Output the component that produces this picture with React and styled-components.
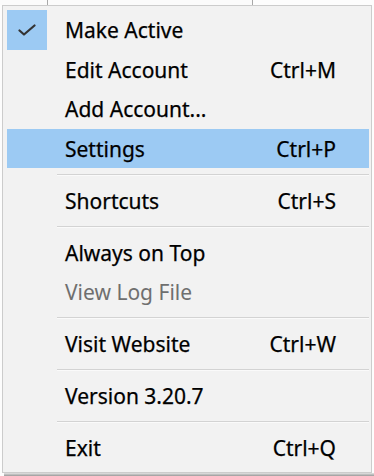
import styled, { createGlobalStyle } from 'styled-components';

const GlobalStyle = createGlobalStyle`
  html, body {
    margin: 0;
    padding: 0;
    background: #ffffff;
  }
  body {
    font-family: "Noto Sans", "Liberation Sans", sans-serif;
  }
`;

const Page = styled.div`
  width: 374px;
  height: 476px;
  display: flex;
  flex-direction: column;
  overflow: hidden;
  background: #fdfdfd;
`;

const Backdrop = styled.div`
  height: 5px;
  display: flex;
  flex: 0 0 auto;
`;

const BackdropCell = styled.div`
  width: ${props => props.$width}px;
  border-right: 1px solid #a8a8a8;
  background: #fbfbfb;
`;

const Menu = styled.div`
  margin-left: 2px;
  width: 370px;
  box-sizing: border-box;
  border: 1px solid #cccccc;
  background: #f2f2f2;
  padding: 4px 2px 4px 4px;
  display: flex;
  flex-direction: column;
`;

const Item = styled.div`
  height: 39.5px;
  display: grid;
  grid-template-columns: 40px 1fr auto;
  align-items: center;
  column-gap: 18px;
  padding-right: 33px;
  background: ${props => (props.$highlighted ? '#9ccaf3' : 'transparent')};
  color: ${props => (props.$disabled ? '#6f6f6f' : '#000000')};
  font-size: 21px;
  line-height: 1;
  -webkit-text-stroke: ${props => (props.$disabled ? '0' : '0.25px')};
`;

const CheckBox = styled.div`
  height: 39.5px;
  display: flex;
  align-items: center;
  justify-content: center;
  background: ${props => (props.$checked ? '#9ccaf3' : 'transparent')};
`;

const Label = styled.span`
  white-space: nowrap;
  padding-top: 2px;
`;

const Shortcut = styled.span`
  white-space: nowrap;
  text-align: right;
  padding-top: 2px;
`;

const Separator = styled.div`
  height: 12.5px;
  display: flex;
  align-items: center;
  padding-left: 50px;

  &::after {
    content: '';
    flex: 1;
    height: 1px;
    background: #d3d3d3;
    box-shadow: 0 1px 0 #fafafa;
  }
`;

const BottomEdge = styled.div`
  flex: 1;
  margin-left: 4px;
  background: linear-gradient(#e4e4e4, #9a9a9a);
`;

function Check() {
  return (
    <svg width="18" height="12" viewBox="0 0 18 12">
      <path
        d="M1.5 6.5 L6 10.5 L16.5 1.5"
        fill="none"
        stroke="#333333"
        strokeWidth="2.2"
        strokeLinecap="round"
        strokeLinejoin="round"
      />
    </svg>
  );
}

const items = [
  { label: 'Make Active', checked: true },
  { label: 'Edit Account', shortcut: 'Ctrl+M' },
  { label: 'Add Account...' },
  { label: 'Settings', shortcut: 'Ctrl+P', highlighted: true },
  { separator: true },
  { label: 'Shortcuts', shortcut: 'Ctrl+S' },
  { separator: true },
  { label: 'Always on Top' },
  { label: 'View Log File', disabled: true },
  { separator: true },
  { label: 'Visit Website', shortcut: 'Ctrl+W' },
  { separator: true },
  { label: 'Version 3.20.7' },
  { separator: true },
  { label: 'Exit', shortcut: 'Ctrl+Q' },
];

export default function App() {
  return (
    <>
      <GlobalStyle />
      <Page>
        <Backdrop>
          <BackdropCell $width={47} />
          <BackdropCell $width={204} />
        </Backdrop>
        <Menu>
          {items.map((item, i) =>
            item.separator ? (
              <Separator key={i} />
            ) : (
              <Item key={i} $highlighted={item.highlighted} $disabled={item.disabled}>
                <CheckBox $checked={item.checked}>{item.checked && <Check />}</CheckBox>
                <Label>{item.label}</Label>
                <Shortcut>{item.shortcut}</Shortcut>
              </Item>
            )
          )}
        </Menu>
        <BottomEdge />
      </Page>
    </>
  );
}
